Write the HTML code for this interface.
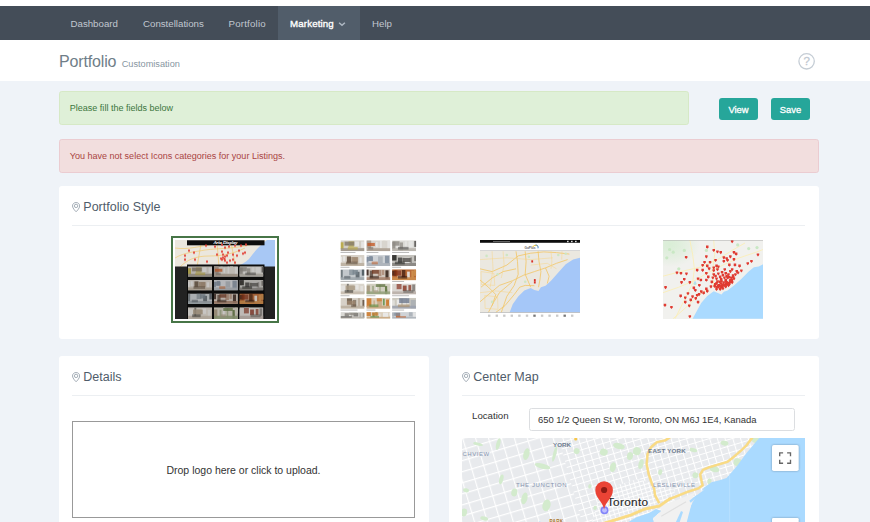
<!DOCTYPE html>
<html lang="en">
<head>
<meta charset="utf-8">
<title>Portfolio Customisation</title>
<style>
*{box-sizing:border-box;margin:0;padding:0}
html,body{width:870px;height:522px;overflow:hidden;background:#eff3f8}
body{position:relative;font-family:"Liberation Sans",sans-serif;font-size:9.7px;color:#333}
.abs{position:absolute}
#topstrip{left:0;top:0;width:870px;height:6px;background:#fff}
#nav{left:0;top:6px;width:870px;height:33.5px;background:#444d58}
#nav a{position:absolute;top:0;height:33.5px;line-height:35px;color:#c1c7d0;text-decoration:none;font-size:9.7px;white-space:nowrap}
#nav a.active{background:#515d6a;color:#fff;-webkit-text-stroke:0.35px #fff;letter-spacing:0.15px}
#head{left:0;top:39.5px;width:870px;height:41.5px;background:#fff}
#head h1{position:absolute;left:59px;top:10px;font-weight:normal;font-size:16px;letter-spacing:-0.15px;color:#6f7e88;line-height:24px;white-space:nowrap}
#head h1 small{font-size:9.2px;letter-spacing:0;color:#8796a1;font-weight:normal;margin-left:1px}
.alert{border:1px solid;border-radius:2.7px;font-size:9.03px;line-height:12px;white-space:nowrap}
#al1{left:59px;top:91px;width:630px;height:34px;background:#dff0d8;border-color:#d6e9c6;color:#3c763d;padding:10px 0 0 9.8px}
#al2{left:59px;top:139px;width:760px;height:34px;background:#f2dede;border-color:#ebccd1;color:#a94442;padding:10px 0 0 9.8px}
.btn{height:22px;line-height:23.5px;text-align:center;color:#fff;background:#26a69a;border-radius:3px;font-size:9.4px;-webkit-text-stroke:0.3px #fff}
.card{background:#fff;border-radius:3px;overflow:hidden}
.cap{position:absolute;left:24.3px;top:12px;font-size:12.5px;color:#4f5c6a;line-height:18px;white-space:nowrap}
.pin{position:absolute;left:12.6px;top:15.8px}
.hr{position:absolute;left:13px;right:14px;top:39px;height:1px;background:#eceff2}
</style>
</head>
<body>
<div id="topstrip" class="abs"></div>
<div id="nav" class="abs">
  <a style="left:70.5px">Dashboard</a>
  <a style="left:143px">Constellations</a>
  <a style="left:228.5px;letter-spacing:0.2px">Portfolio</a>
  <a class="active" style="left:278px;width:82px;padding-left:12px">Marketing<svg class="abs" style="left:60.3px;top:15.6px" width="8" height="5" viewBox="0 0 8 5"><path d="M1.1 0.7L4 3.3L6.9 0.7" fill="none" stroke="#aeb8c3" stroke-width="1.5"/></svg></a>
  <a style="left:372px">Help</a>
</div>
<div id="head" class="abs">
  <h1>Portfolio <small>Customisation</small></h1>
  <svg class="abs" style="left:797px;top:12px" width="19" height="19" viewBox="0 0 19 19"><circle cx="9.6" cy="9.3" r="7.7" fill="none" stroke="#c5cdd5" stroke-width="1.3"/><text x="9.6" y="13.3" font-family="Liberation Sans,sans-serif" font-size="11.5" fill="#bfc8d1" stroke="#bfc8d1" stroke-width="0.3" text-anchor="middle">?</text></svg>
</div>
<div id="al1" class="abs alert">Please fill the fields below</div>
<div class="abs btn" style="left:719px;top:98px;width:39px">View</div>
<div class="abs btn" style="left:771px;top:98px;width:39px">Save</div>
<div id="al2" class="abs alert">You have not select Icons categories for your Listings.</div>

<div id="c1" class="abs card" style="left:59px;top:186px;width:760px;height:153px">
  <svg class="pin" width="8.2" height="10.2" viewBox="0 0 8.2 10.2"><path d="M4.1 0.5C6.1 0.5 7.7 2 7.7 4C7.7 6.4 4.1 9.8 4.1 9.8C4.1 9.8 0.5 6.4 0.5 4C0.5 2 2.1 0.5 4.1 0.5Z" fill="none" stroke="#8d99a5" stroke-width="0.8"/><circle cx="4.1" cy="3.9" r="1.7" fill="none" stroke="#8d99a5" stroke-width="0.8"/></svg><div class="cap">Portfolio Style</div>
  <div class="hr"></div>
  <div class="abs" style="left:112px;top:50px;width:108px;height:87px;border:2px solid #477547"></div>
  <svg class="abs" style="left:116px;top:54px" width="100" height="79" viewBox="0 0 100 79"><defs><filter id="b1"><feGaussianBlur stdDeviation="0.45"/></filter></defs><g filter="url(#b1)"><rect width="100" height="27" fill="#ebe7de"/><path d="M100 0L100 27L62 27C66 24 70 23 74 19C77 15 80 11 83 8C86 5 89 2.5 92 0Z" fill="#a8c8f5"/><path d="M0 18C10 12 20 12 30 10C45 8 60 9 78 4M5 27C12 20 20 16 34 16C46 16 58 14 70 8M0 8C14 10 24 6 40 4M22 27L26 4M44 27L42 2M60 24L56 2" fill="none" stroke="#f2c765" stroke-width="0.7" opacity=".9"/><rect y="26.5" width="100" height="52.5" fill="#232323"/><rect x="12" y="24.5" width="77.5" height="54.5" fill="#0b0b0b"/><rect x="12" y="0.3" width="77.5" height="5" fill="#0a0a0a"/><path d="M47.1 16.5h1.8v1.4l-0.9 1.5l-0.9 -1.5Z" fill="#e2453b"/><path d="M48.6 18.0h1.8v1.4l-0.9 1.5l-0.9 -1.5Z" fill="#e2453b"/><path d="M46.1 18.5h1.8v1.4l-0.9 1.5l-0.9 -1.5Z" fill="#e2453b"/><path d="M49.1 15.5h1.8v1.4l-0.9 1.5l-0.9 -1.5Z" fill="#e2453b"/><path d="M30.1 4.5h1.8v1.4l-0.9 1.5l-0.9 -1.5Z" fill="#e2453b"/><path d="M39.1 5.5h1.8v1.4l-0.9 1.5l-0.9 -1.5Z" fill="#e2453b"/><path d="M46.1 3.5h1.8v1.4l-0.9 1.5l-0.9 -1.5Z" fill="#e2453b"/><path d="M49.1 6.5h1.8v1.4l-0.9 1.5l-0.9 -1.5Z" fill="#e2453b"/><path d="M53.1 5.5h1.8v1.4l-0.9 1.5l-0.9 -1.5Z" fill="#e2453b"/><path d="M59.1 4.5h1.8v1.4l-0.9 1.5l-0.9 -1.5Z" fill="#e2453b"/><path d="M65.1 4.5h1.8v1.4l-0.9 1.5l-0.9 -1.5Z" fill="#e2453b"/><path d="M70.1 3.5h1.8v1.4l-0.9 1.5l-0.9 -1.5Z" fill="#e2453b"/><path d="M13.1 9.5h1.8v1.4l-0.9 1.5l-0.9 -1.5Z" fill="#e2453b"/><path d="M9.1 14.5h1.8v1.4l-0.9 1.5l-0.9 -1.5Z" fill="#e2453b"/><path d="M18.1 11.5h1.8v1.4l-0.9 1.5l-0.9 -1.5Z" fill="#e2453b"/><path d="M41.1 13.5h1.8v1.4l-0.9 1.5l-0.9 -1.5Z" fill="#e2453b"/><path d="M46.1 10.5h1.8v1.4l-0.9 1.5l-0.9 -1.5Z" fill="#e2453b"/><path d="M47.1 13.5h1.8v1.4l-0.9 1.5l-0.9 -1.5Z" fill="#e2453b"/><path d="M51.1 14.5h1.8v1.4l-0.9 1.5l-0.9 -1.5Z" fill="#e2453b"/><path d="M52.1 11.5h1.8v1.4l-0.9 1.5l-0.9 -1.5Z" fill="#e2453b"/><path d="M57.1 13.5h1.8v1.4l-0.9 1.5l-0.9 -1.5Z" fill="#e2453b"/><path d="M63.1 9.5h1.8v1.4l-0.9 1.5l-0.9 -1.5Z" fill="#e2453b"/><path d="M61.1 14.5h1.8v1.4l-0.9 1.5l-0.9 -1.5Z" fill="#e2453b"/><path d="M67.1 12.5h1.8v1.4l-0.9 1.5l-0.9 -1.5Z" fill="#e2453b"/><path d="M69.1 11.5h1.8v1.4l-0.9 1.5l-0.9 -1.5Z" fill="#e2453b"/><path d="M9.1 18.5h1.8v1.4l-0.9 1.5l-0.9 -1.5Z" fill="#e2453b"/><path d="M19.1 18.5h1.8v1.4l-0.9 1.5l-0.9 -1.5Z" fill="#e2453b"/><path d="M31.1 20.5h1.8v1.4l-0.9 1.5l-0.9 -1.5Z" fill="#e2453b"/><path d="M45.1 17.5h1.8v1.4l-0.9 1.5l-0.9 -1.5Z" fill="#e2453b"/><path d="M49.1 19.5h1.8v1.4l-0.9 1.5l-0.9 -1.5Z" fill="#e2453b"/><path d="M54.1 19.5h1.8v1.4l-0.9 1.5l-0.9 -1.5Z" fill="#e2453b"/><path d="M57.1 18.5h1.8v1.4l-0.9 1.5l-0.9 -1.5Z" fill="#e2453b"/><path d="M59.1 21.5h1.8v1.4l-0.9 1.5l-0.9 -1.5Z" fill="#e2453b"/><path d="M51.1 21.5h1.8v1.4l-0.9 1.5l-0.9 -1.5Z" fill="#e2453b"/><svg x="13.00" y="26.30" width="24.00" height="10.40"><rect width="24.00" height="10.40" fill="#e6e1d8"/><rect x="0.00" y="1.88" width="3.01" height="6.52" fill="#c9b84a" opacity="0.91"/><rect x="3.89" y="1.70" width="3.75" height="7.60" fill="#e6e1d8" opacity="0.70"/><rect x="8.03" y="1.00" width="5.34" height="5.28" fill="#c9b84a" opacity="0.65"/><rect x="14.38" y="1.06" width="4.11" height="4.73" fill="#ffffff" opacity="0.82"/><rect x="20.63" y="1.12" width="4.12" height="5.97" fill="#ffffff" opacity="0.84"/><rect x="4.05" y="1.28" width="9.74" height="3.76" fill="#8f8373" opacity=".8"/><rect y="7.49" width="24.00" height="2.91" fill="#a79f93" opacity=".85"/><rect x="7.33" y="6.24" width="9.88" height="2.60" fill="#c9b84a" opacity=".6"/><rect width="24.00" height="10.40" fill="#2b2622" opacity="0.25"/></svg><svg x="38.90" y="26.30" width="24.00" height="10.40"><rect width="24.00" height="10.40" fill="#ece8e2"/><rect x="0.00" y="0.04" width="4.78" height="7.51" fill="#b7a99b" opacity="0.96"/><rect x="6.62" y="0.24" width="2.13" height="6.34" fill="#ece8e2" opacity="0.73"/><rect x="9.66" y="1.49" width="1.54" height="4.97" fill="#ffffff" opacity="0.90"/><rect x="13.64" y="0.27" width="1.73" height="7.26" fill="#ffffff" opacity="0.81"/><rect x="16.13" y="0.02" width="3.00" height="7.32" fill="#ece8e2" opacity="0.89"/><rect x="20.96" y="0.63" width="3.08" height="7.83" fill="#ffffff" opacity="0.78"/><rect x="1.00" y="2.49" width="7.45" height="2.94" fill="#d8622a" opacity=".8"/><rect y="7.49" width="24.00" height="2.91" fill="#b7a99b" opacity=".85"/><rect x="1.87" y="6.24" width="4.94" height="2.60" fill="#8b8078" opacity=".6"/><rect width="24.00" height="10.40" fill="#2b2622" opacity="0.25"/></svg><svg x="64.40" y="26.30" width="24.00" height="10.40"><rect width="24.00" height="10.40" fill="#efeeea"/><rect x="0.00" y="1.35" width="3.32" height="7.08" fill="#9a9690" opacity="0.83"/><rect x="4.52" y="2.48" width="2.75" height="4.75" fill="#ffffff" opacity="0.66"/><rect x="7.59" y="2.03" width="3.33" height="7.87" fill="#9a9690" opacity="0.71"/><rect x="12.71" y="0.89" width="2.06" height="4.90" fill="#ffffff" opacity="0.68"/><rect x="16.44" y="0.88" width="4.24" height="5.61" fill="#ffffff" opacity="0.75"/><rect x="22.17" y="0.56" width="3.31" height="5.68" fill="#5c5a58" opacity="0.87"/><rect x="0.41" y="0.90" width="7.01" height="4.22" fill="#9a9690" opacity=".8"/><rect y="7.49" width="24.00" height="2.91" fill="#c5c1ba" opacity=".85"/><rect x="5.86" y="6.24" width="10.59" height="2.60" fill="#5c5a58" opacity=".6"/><rect width="24.00" height="10.40" fill="#2b2622" opacity="0.25"/></svg><svg x="13.00" y="40.00" width="24.00" height="10.40"><rect width="24.00" height="10.40" fill="#ebe5dc"/><rect x="0.00" y="1.75" width="1.64" height="4.97" fill="#ffffff" opacity="0.92"/><rect x="2.57" y="1.22" width="2.19" height="4.88" fill="#ffffff" opacity="0.87"/><rect x="6.41" y="1.35" width="4.08" height="6.05" fill="#6e5a48" opacity="0.90"/><rect x="12.96" y="2.18" width="4.82" height="7.93" fill="#cdbfae" opacity="0.75"/><rect x="19.13" y="2.30" width="1.95" height="5.25" fill="#ffffff" opacity="0.77"/><rect x="21.85" y="1.51" width="2.32" height="8.07" fill="#ebe5dc" opacity="0.72"/><rect x="10.79" y="1.92" width="6.59" height="5.07" fill="#a98f74" opacity=".8"/><rect y="7.49" width="24.00" height="2.91" fill="#cdbfae" opacity=".85"/><rect x="5.47" y="6.24" width="11.60" height="2.60" fill="#6e5a48" opacity=".6"/><rect width="24.00" height="10.40" fill="#2b2622" opacity="0.25"/></svg><svg x="38.90" y="40.00" width="24.00" height="10.40"><rect width="24.00" height="10.40" fill="#e3e7ec"/><rect x="0.00" y="1.80" width="2.02" height="5.41" fill="#8a98ab" opacity="0.85"/><rect x="2.76" y="0.94" width="3.49" height="4.71" fill="#8a98ab" opacity="0.83"/><rect x="8.18" y="0.62" width="2.83" height="6.19" fill="#e3e7ec" opacity="0.61"/><rect x="11.67" y="1.31" width="4.65" height="6.25" fill="#b9c0c9" opacity="0.90"/><rect x="18.55" y="0.69" width="4.34" height="7.65" fill="#8a98ab" opacity="0.86"/><rect x="0.73" y="1.80" width="5.88" height="3.90" fill="#8a98ab" opacity=".8"/><rect y="7.49" width="24.00" height="2.91" fill="#b9c0c9" opacity=".85"/><rect x="5.29" y="6.24" width="6.14" height="2.60" fill="#d0703a" opacity=".6"/><rect width="24.00" height="10.40" fill="#2b2622" opacity="0.25"/></svg><svg x="64.40" y="40.00" width="24.00" height="10.40"><rect width="24.00" height="10.40" fill="#d6d4d0"/><rect x="0.00" y="0.08" width="4.46" height="5.20" fill="#2f2e2d" opacity="0.93"/><rect x="5.84" y="2.46" width="4.10" height="4.89" fill="#2f2e2d" opacity="0.73"/><rect x="12.23" y="2.50" width="4.85" height="7.64" fill="#ffffff" opacity="0.76"/><rect x="18.31" y="2.30" width="1.51" height="5.27" fill="#8d8a86" opacity="0.87"/><rect x="22.07" y="0.76" width="2.25" height="5.04" fill="#55524f" opacity="0.61"/><rect x="10.30" y="2.83" width="8.30" height="3.78" fill="#55524f" opacity=".8"/><rect y="7.49" width="24.00" height="2.91" fill="#8d8a86" opacity=".85"/><rect x="2.82" y="6.24" width="9.88" height="2.60" fill="#2f2e2d" opacity=".6"/><rect width="24.00" height="10.40" fill="#2b2622" opacity="0.25"/></svg><svg x="13.00" y="53.50" width="24.00" height="10.40"><rect width="24.00" height="10.40" fill="#d5dbe0"/><rect x="0.00" y="0.54" width="2.22" height="8.16" fill="#5d6870" opacity="0.74"/><rect x="2.73" y="2.51" width="3.94" height="7.93" fill="#d5dbe0" opacity="0.62"/><rect x="8.62" y="0.10" width="4.70" height="5.37" fill="#7f8e9a" opacity="0.61"/><rect x="15.14" y="2.34" width="3.89" height="6.46" fill="#5d6870" opacity="0.84"/><rect x="21.34" y="0.18" width="2.61" height="5.80" fill="#5d6870" opacity="0.99"/><rect x="12.08" y="0.66" width="5.32" height="4.34" fill="#7f8e9a" opacity=".8"/><rect y="7.49" width="24.00" height="2.91" fill="#a9b3ba" opacity=".85"/><rect x="3.70" y="6.24" width="6.21" height="2.60" fill="#5d6870" opacity=".6"/><rect width="24.00" height="10.40" fill="#2b2622" opacity="0.25"/></svg><svg x="38.90" y="53.50" width="24.00" height="10.40"><rect width="24.00" height="10.40" fill="#e5d9cf"/><rect x="0.00" y="0.18" width="2.17" height="5.56" fill="#3f2a22" opacity="0.90"/><rect x="3.45" y="1.31" width="3.24" height="7.33" fill="#3f2a22" opacity="0.66"/><rect x="8.74" y="0.53" width="2.57" height="6.70" fill="#e5d9cf" opacity="0.97"/><rect x="11.45" y="0.56" width="3.56" height="5.96" fill="#b38a72" opacity="0.74"/><rect x="15.60" y="0.56" width="2.29" height="4.82" fill="#b38a72" opacity="0.70"/><rect x="19.03" y="0.94" width="3.13" height="8.23" fill="#3f2a22" opacity="0.91"/><rect x="5.49" y="0.65" width="6.86" height="3.54" fill="#7c3f27" opacity=".8"/><rect y="7.49" width="24.00" height="2.91" fill="#b38a72" opacity=".85"/><rect x="3.25" y="6.24" width="9.26" height="2.60" fill="#3f2a22" opacity=".6"/><rect width="24.00" height="10.40" fill="#2b2622" opacity="0.25"/></svg><svg x="64.40" y="53.50" width="24.00" height="10.40"><rect width="24.00" height="10.40" fill="#c9733a"/><rect x="0.00" y="1.34" width="4.17" height="4.70" fill="#3c1a10" opacity="0.75"/><rect x="5.33" y="0.90" width="4.09" height="8.11" fill="#ffffff" opacity="0.60"/><rect x="9.80" y="0.62" width="3.45" height="8.06" fill="#3c1a10" opacity="0.71"/><rect x="15.00" y="2.16" width="2.70" height="6.47" fill="#ffffff" opacity="0.89"/><rect x="19.23" y="1.21" width="2.48" height="6.86" fill="#e09a52" opacity="0.97"/><rect x="21.74" y="0.59" width="4.92" height="5.65" fill="#e09a52" opacity="0.89"/><rect x="2.21" y="0.98" width="6.86" height="5.06" fill="#8c2f14" opacity=".8"/><rect y="7.49" width="24.00" height="2.91" fill="#e09a52" opacity=".85"/><rect x="5.86" y="6.24" width="9.20" height="2.60" fill="#3c1a10" opacity=".6"/><rect width="24.00" height="10.40" fill="#2b2622" opacity="0.25"/></svg><svg x="13.00" y="67.30" width="24.00" height="11.70"><rect width="24.00" height="11.70" fill="#efe9e0"/><rect x="0.00" y="2.15" width="5.40" height="9.10" fill="#ffffff" opacity="0.66"/><rect x="6.38" y="0.19" width="1.91" height="9.36" fill="#4a4640" opacity="0.60"/><rect x="8.35" y="1.46" width="5.03" height="7.25" fill="#d6cabb" opacity="0.63"/><rect x="14.21" y="1.12" width="3.86" height="5.37" fill="#ffffff" opacity="0.78"/><rect x="19.86" y="2.56" width="2.62" height="9.07" fill="#ffffff" opacity="0.61"/><rect x="23.85" y="2.11" width="4.58" height="9.16" fill="#b8a68f" opacity="0.82"/><rect x="5.03" y="2.22" width="9.69" height="4.82" fill="#b8a68f" opacity=".8"/><rect y="8.42" width="24.00" height="3.28" fill="#d6cabb" opacity=".85"/><rect x="4.18" y="7.02" width="8.44" height="2.92" fill="#4a4640" opacity=".6"/><rect width="24.00" height="11.70" fill="#2b2622" opacity="0.25"/></svg><svg x="38.90" y="67.30" width="24.00" height="11.70"><rect width="24.00" height="11.70" fill="#e6e2d4"/><rect x="0.00" y="2.13" width="3.46" height="8.72" fill="#b7a98f" opacity="0.99"/><rect x="5.68" y="2.48" width="1.89" height="6.16" fill="#9fae84" opacity="0.70"/><rect x="9.17" y="0.29" width="1.56" height="8.91" fill="#ffffff" opacity="0.89"/><rect x="12.84" y="1.15" width="1.50" height="9.25" fill="#9fae84" opacity="0.72"/><rect x="15.16" y="2.27" width="3.28" height="6.97" fill="#e6e2d4" opacity="0.61"/><rect x="18.58" y="2.75" width="2.36" height="8.65" fill="#6f8550" opacity="0.97"/><rect x="20.96" y="0.40" width="5.38" height="5.91" fill="#e6e2d4" opacity="0.90"/><rect x="9.35" y="0.68" width="9.51" height="3.02" fill="#6f8550" opacity=".8"/><rect y="8.42" width="24.00" height="3.28" fill="#9fae84" opacity=".85"/><rect x="6.90" y="7.02" width="4.85" height="2.92" fill="#b7a98f" opacity=".6"/><rect width="24.00" height="11.70" fill="#2b2622" opacity="0.25"/></svg><svg x="64.40" y="67.30" width="24.00" height="11.70"><rect width="24.00" height="11.70" fill="#eeeae6"/><rect x="0.00" y="1.90" width="3.33" height="7.45" fill="#eeeae6" opacity="0.73"/><rect x="4.96" y="0.39" width="5.41" height="6.57" fill="#ffffff" opacity="0.77"/><rect x="10.69" y="2.19" width="3.82" height="5.82" fill="#9c4a38" opacity="0.91"/><rect x="16.31" y="1.70" width="2.78" height="6.20" fill="#9c4a38" opacity="0.85"/><rect x="20.12" y="1.08" width="2.79" height="7.59" fill="#6f6a66" opacity="0.67"/><rect x="4.55" y="0.53" width="4.93" height="5.63" fill="#9c4a38" opacity=".8"/><rect y="8.42" width="24.00" height="3.28" fill="#c9bdb6" opacity=".85"/><rect x="11.18" y="7.02" width="10.14" height="2.92" fill="#6f6a66" opacity=".6"/><rect width="24.00" height="11.70" fill="#2b2622" opacity="0.25"/></svg></g><text x="50.5" y="4.3" font-family="Liberation Serif,serif" font-style="italic" font-size="4.6" fill="#fff" stroke="#fff" stroke-width="0.15" text-anchor="middle">Aria Display</text></svg>
  <svg class="abs" style="left:281px;top:54px" width="77" height="79" viewBox="0 0 77 79"><defs><filter id="b2"><feGaussianBlur stdDeviation="0.45"/></filter></defs><g filter="url(#b2)"><svg x="0.50" y="0.30" width="24.00" height="11.00"><rect width="24.00" height="11.00" fill="#e6e1d8"/><rect x="0.00" y="1.98" width="3.01" height="6.90" fill="#c9b84a" opacity="0.91"/><rect x="3.89" y="1.80" width="3.75" height="8.04" fill="#e6e1d8" opacity="0.70"/><rect x="8.03" y="1.06" width="5.34" height="5.58" fill="#c9b84a" opacity="0.65"/><rect x="14.38" y="1.12" width="4.11" height="5.00" fill="#ffffff" opacity="0.82"/><rect x="20.63" y="1.18" width="4.12" height="6.31" fill="#ffffff" opacity="0.84"/><rect x="4.05" y="1.35" width="9.74" height="3.98" fill="#8f8373" opacity=".8"/><rect y="7.92" width="24.00" height="3.08" fill="#a79f93" opacity=".85"/><rect x="7.33" y="6.60" width="9.88" height="2.75" fill="#c9b84a" opacity=".6"/><rect width="24.00" height="11.00" fill="#2b2622" opacity="0.1"/></svg><rect x="0.5" y="12.100000000000001" width="15" height="0.9" fill="#b5b5b5"/><svg x="26.40" y="0.30" width="24.00" height="11.00"><rect width="24.00" height="11.00" fill="#ece8e2"/><rect x="0.00" y="0.05" width="4.78" height="7.95" fill="#b7a99b" opacity="0.96"/><rect x="6.62" y="0.26" width="2.13" height="6.71" fill="#ece8e2" opacity="0.73"/><rect x="9.66" y="1.57" width="1.54" height="5.25" fill="#ffffff" opacity="0.90"/><rect x="13.64" y="0.29" width="1.73" height="7.68" fill="#ffffff" opacity="0.81"/><rect x="16.13" y="0.02" width="3.00" height="7.75" fill="#ece8e2" opacity="0.89"/><rect x="20.96" y="0.67" width="3.08" height="8.28" fill="#ffffff" opacity="0.78"/><rect x="1.00" y="2.64" width="7.45" height="3.11" fill="#d8622a" opacity=".8"/><rect y="7.92" width="24.00" height="3.08" fill="#b7a99b" opacity=".85"/><rect x="1.87" y="6.60" width="4.94" height="2.75" fill="#8b8078" opacity=".6"/><rect width="24.00" height="11.00" fill="#2b2622" opacity="0.1"/></svg><rect x="26.4" y="12.100000000000001" width="12" height="0.9" fill="#b5b5b5"/><svg x="52.10" y="0.30" width="24.00" height="11.00"><rect width="24.00" height="11.00" fill="#efeeea"/><rect x="0.00" y="1.43" width="3.32" height="7.49" fill="#9a9690" opacity="0.83"/><rect x="4.52" y="2.63" width="2.75" height="5.03" fill="#ffffff" opacity="0.66"/><rect x="7.59" y="2.15" width="3.33" height="8.33" fill="#9a9690" opacity="0.71"/><rect x="12.71" y="0.94" width="2.06" height="5.18" fill="#ffffff" opacity="0.68"/><rect x="16.44" y="0.93" width="4.24" height="5.93" fill="#ffffff" opacity="0.75"/><rect x="22.17" y="0.59" width="3.31" height="6.01" fill="#5c5a58" opacity="0.87"/><rect x="0.41" y="0.95" width="7.01" height="4.46" fill="#9a9690" opacity=".8"/><rect y="7.92" width="24.00" height="3.08" fill="#c5c1ba" opacity=".85"/><rect x="5.86" y="6.60" width="10.59" height="2.75" fill="#5c5a58" opacity=".6"/><rect width="24.00" height="11.00" fill="#2b2622" opacity="0.1"/></svg><rect x="52.1" y="12.100000000000001" width="17" height="0.9" fill="#b5b5b5"/><svg x="0.50" y="15.00" width="24.00" height="11.00"><rect width="24.00" height="11.00" fill="#ebe5dc"/><rect x="0.00" y="1.85" width="1.64" height="5.26" fill="#ffffff" opacity="0.92"/><rect x="2.57" y="1.29" width="2.19" height="5.16" fill="#ffffff" opacity="0.87"/><rect x="6.41" y="1.43" width="4.08" height="6.40" fill="#6e5a48" opacity="0.90"/><rect x="12.96" y="2.30" width="4.82" height="8.38" fill="#cdbfae" opacity="0.75"/><rect x="19.13" y="2.43" width="1.95" height="5.55" fill="#ffffff" opacity="0.77"/><rect x="21.85" y="1.60" width="2.32" height="8.54" fill="#ebe5dc" opacity="0.72"/><rect x="10.79" y="2.03" width="6.59" height="5.37" fill="#a98f74" opacity=".8"/><rect y="7.92" width="24.00" height="3.08" fill="#cdbfae" opacity=".85"/><rect x="5.47" y="6.60" width="11.60" height="2.75" fill="#6e5a48" opacity=".6"/><rect width="24.00" height="11.00" fill="#2b2622" opacity="0.1"/></svg><rect x="0.5" y="26.8" width="9" height="0.9" fill="#b5b5b5"/><svg x="26.40" y="15.00" width="24.00" height="11.00"><rect width="24.00" height="11.00" fill="#e3e7ec"/><rect x="0.00" y="1.90" width="2.02" height="5.72" fill="#8a98ab" opacity="0.85"/><rect x="2.76" y="1.00" width="3.49" height="4.98" fill="#8a98ab" opacity="0.83"/><rect x="8.18" y="0.65" width="2.83" height="6.54" fill="#e3e7ec" opacity="0.61"/><rect x="11.67" y="1.38" width="4.65" height="6.61" fill="#b9c0c9" opacity="0.90"/><rect x="18.55" y="0.73" width="4.34" height="8.09" fill="#8a98ab" opacity="0.86"/><rect x="0.73" y="1.90" width="5.88" height="4.12" fill="#8a98ab" opacity=".8"/><rect y="7.92" width="24.00" height="3.08" fill="#b9c0c9" opacity=".85"/><rect x="5.29" y="6.60" width="6.14" height="2.75" fill="#d0703a" opacity=".6"/><rect width="24.00" height="11.00" fill="#2b2622" opacity="0.1"/></svg><rect x="26.4" y="26.8" width="9" height="0.9" fill="#b5b5b5"/><svg x="52.10" y="15.00" width="24.00" height="11.00"><rect width="24.00" height="11.00" fill="#d6d4d0"/><rect x="0.00" y="0.08" width="4.46" height="5.50" fill="#2f2e2d" opacity="0.93"/><rect x="5.84" y="2.60" width="4.10" height="5.17" fill="#2f2e2d" opacity="0.73"/><rect x="12.23" y="2.65" width="4.85" height="8.08" fill="#ffffff" opacity="0.76"/><rect x="18.31" y="2.43" width="1.51" height="5.58" fill="#8d8a86" opacity="0.87"/><rect x="22.07" y="0.80" width="2.25" height="5.33" fill="#55524f" opacity="0.61"/><rect x="10.30" y="2.99" width="8.30" height="4.00" fill="#55524f" opacity=".8"/><rect y="7.92" width="24.00" height="3.08" fill="#8d8a86" opacity=".85"/><rect x="2.82" y="6.60" width="9.88" height="2.75" fill="#2f2e2d" opacity=".6"/><rect width="24.00" height="11.00" fill="#2b2622" opacity="0.1"/></svg><rect x="52.1" y="26.8" width="9" height="0.9" fill="#b5b5b5"/><svg x="0.50" y="29.30" width="24.00" height="11.00"><rect width="24.00" height="11.00" fill="#d5dbe0"/><rect x="0.00" y="0.57" width="2.22" height="8.63" fill="#5d6870" opacity="0.74"/><rect x="2.73" y="2.65" width="3.94" height="8.39" fill="#d5dbe0" opacity="0.62"/><rect x="8.62" y="0.11" width="4.70" height="5.68" fill="#7f8e9a" opacity="0.61"/><rect x="15.14" y="2.48" width="3.89" height="6.83" fill="#5d6870" opacity="0.84"/><rect x="21.34" y="0.19" width="2.61" height="6.13" fill="#5d6870" opacity="0.99"/><rect x="12.08" y="0.70" width="5.32" height="4.59" fill="#7f8e9a" opacity=".8"/><rect y="7.92" width="24.00" height="3.08" fill="#a9b3ba" opacity=".85"/><rect x="3.70" y="6.60" width="6.21" height="2.75" fill="#5d6870" opacity=".6"/><rect width="24.00" height="11.00" fill="#2b2622" opacity="0.1"/></svg><rect x="0.5" y="41.1" width="15" height="0.9" fill="#b5b5b5"/><svg x="26.40" y="29.30" width="24.00" height="11.00"><rect width="24.00" height="11.00" fill="#e5d9cf"/><rect x="0.00" y="0.19" width="2.17" height="5.88" fill="#3f2a22" opacity="0.90"/><rect x="3.45" y="1.39" width="3.24" height="7.75" fill="#3f2a22" opacity="0.66"/><rect x="8.74" y="0.56" width="2.57" height="7.09" fill="#e5d9cf" opacity="0.97"/><rect x="11.45" y="0.59" width="3.56" height="6.31" fill="#b38a72" opacity="0.74"/><rect x="15.60" y="0.59" width="2.29" height="5.10" fill="#b38a72" opacity="0.70"/><rect x="19.03" y="1.00" width="3.13" height="8.71" fill="#3f2a22" opacity="0.91"/><rect x="5.49" y="0.68" width="6.86" height="3.75" fill="#7c3f27" opacity=".8"/><rect y="7.92" width="24.00" height="3.08" fill="#b38a72" opacity=".85"/><rect x="3.25" y="6.60" width="9.26" height="2.75" fill="#3f2a22" opacity=".6"/><rect width="24.00" height="11.00" fill="#2b2622" opacity="0.1"/></svg><rect x="26.4" y="41.1" width="9" height="0.9" fill="#b5b5b5"/><svg x="52.10" y="29.30" width="24.00" height="11.00"><rect width="24.00" height="11.00" fill="#c9733a"/><rect x="0.00" y="1.41" width="4.17" height="4.97" fill="#3c1a10" opacity="0.75"/><rect x="5.33" y="0.95" width="4.09" height="8.58" fill="#ffffff" opacity="0.60"/><rect x="9.80" y="0.66" width="3.45" height="8.53" fill="#3c1a10" opacity="0.71"/><rect x="15.00" y="2.29" width="2.70" height="6.85" fill="#ffffff" opacity="0.89"/><rect x="19.23" y="1.28" width="2.48" height="7.26" fill="#e09a52" opacity="0.97"/><rect x="21.74" y="0.62" width="4.92" height="5.98" fill="#e09a52" opacity="0.89"/><rect x="2.21" y="1.04" width="6.86" height="5.35" fill="#8c2f14" opacity=".8"/><rect y="7.92" width="24.00" height="3.08" fill="#e09a52" opacity=".85"/><rect x="5.86" y="6.60" width="9.20" height="2.75" fill="#3c1a10" opacity=".6"/><rect width="24.00" height="11.00" fill="#2b2622" opacity="0.1"/></svg><rect x="52.1" y="41.1" width="12" height="0.9" fill="#b5b5b5"/><svg x="0.50" y="43.50" width="24.00" height="11.00"><rect width="24.00" height="11.00" fill="#efe9e0"/><rect x="0.00" y="2.02" width="5.40" height="8.56" fill="#ffffff" opacity="0.66"/><rect x="6.38" y="0.18" width="1.91" height="8.80" fill="#4a4640" opacity="0.60"/><rect x="8.35" y="1.37" width="5.03" height="6.82" fill="#d6cabb" opacity="0.63"/><rect x="14.21" y="1.05" width="3.86" height="5.05" fill="#ffffff" opacity="0.78"/><rect x="19.86" y="2.41" width="2.62" height="8.53" fill="#ffffff" opacity="0.61"/><rect x="23.85" y="1.99" width="4.58" height="8.61" fill="#b8a68f" opacity="0.82"/><rect x="5.03" y="2.08" width="9.69" height="4.53" fill="#b8a68f" opacity=".8"/><rect y="7.92" width="24.00" height="3.08" fill="#d6cabb" opacity=".85"/><rect x="4.18" y="6.60" width="8.44" height="2.75" fill="#4a4640" opacity=".6"/><rect width="24.00" height="11.00" fill="#2b2622" opacity="0.1"/></svg><rect x="0.5" y="55.3" width="9" height="0.9" fill="#b5b5b5"/><svg x="26.40" y="43.50" width="24.00" height="11.00"><rect width="24.00" height="11.00" fill="#e6e2d4"/><rect x="0.00" y="2.00" width="3.46" height="8.20" fill="#b7a98f" opacity="0.99"/><rect x="5.68" y="2.33" width="1.89" height="5.79" fill="#9fae84" opacity="0.70"/><rect x="9.17" y="0.28" width="1.56" height="8.38" fill="#ffffff" opacity="0.89"/><rect x="12.84" y="1.08" width="1.50" height="8.70" fill="#9fae84" opacity="0.72"/><rect x="15.16" y="2.14" width="3.28" height="6.55" fill="#e6e2d4" opacity="0.61"/><rect x="18.58" y="2.58" width="2.36" height="8.13" fill="#6f8550" opacity="0.97"/><rect x="20.96" y="0.38" width="5.38" height="5.56" fill="#e6e2d4" opacity="0.90"/><rect x="9.35" y="0.64" width="9.51" height="2.84" fill="#6f8550" opacity=".8"/><rect y="7.92" width="24.00" height="3.08" fill="#9fae84" opacity=".85"/><rect x="6.90" y="6.60" width="4.85" height="2.75" fill="#b7a98f" opacity=".6"/><rect width="24.00" height="11.00" fill="#2b2622" opacity="0.1"/></svg><rect x="26.4" y="55.3" width="9" height="0.9" fill="#b5b5b5"/><svg x="52.10" y="43.50" width="24.00" height="11.00"><rect width="24.00" height="11.00" fill="#eeeae6"/><rect x="0.00" y="1.78" width="3.33" height="7.00" fill="#eeeae6" opacity="0.73"/><rect x="4.96" y="0.37" width="5.41" height="6.17" fill="#ffffff" opacity="0.77"/><rect x="10.69" y="2.06" width="3.82" height="5.47" fill="#9c4a38" opacity="0.91"/><rect x="16.31" y="1.60" width="2.78" height="5.83" fill="#9c4a38" opacity="0.85"/><rect x="20.12" y="1.01" width="2.79" height="7.14" fill="#6f6a66" opacity="0.67"/><rect x="4.55" y="0.50" width="4.93" height="5.29" fill="#9c4a38" opacity=".8"/><rect y="7.92" width="24.00" height="3.08" fill="#c9bdb6" opacity=".85"/><rect x="11.18" y="6.60" width="10.14" height="2.75" fill="#6f6a66" opacity=".6"/><rect width="24.00" height="11.00" fill="#2b2622" opacity="0.1"/></svg><rect x="52.1" y="55.3" width="17" height="0.9" fill="#b5b5b5"/><svg x="0.50" y="57.80" width="24.00" height="11.00"><rect width="24.00" height="11.00" fill="#ebe5dc"/><rect x="0.00" y="2.31" width="4.61" height="6.74" fill="#ebe5dc" opacity="0.93"/><rect x="6.45" y="0.54" width="5.09" height="5.73" fill="#6e5a48" opacity="0.85"/><rect x="12.38" y="2.10" width="3.37" height="6.53" fill="#6e5a48" opacity="0.64"/><rect x="17.39" y="0.39" width="2.32" height="8.47" fill="#cdbfae" opacity="1.00"/><rect x="19.87" y="1.12" width="2.10" height="5.89" fill="#ebe5dc" opacity="0.82"/><rect x="21.97" y="2.12" width="2.21" height="6.98" fill="#6e5a48" opacity="0.90"/><rect x="6.46" y="2.91" width="8.17" height="4.48" fill="#a98f74" opacity=".8"/><rect y="7.92" width="24.00" height="3.08" fill="#cdbfae" opacity=".85"/><rect x="10.69" y="6.60" width="4.93" height="2.75" fill="#6e5a48" opacity=".6"/><rect width="24.00" height="11.00" fill="#2b2622" opacity="0.1"/></svg><rect x="0.5" y="69.6" width="17" height="0.9" fill="#b5b5b5"/><svg x="26.40" y="57.80" width="24.00" height="11.00"><rect width="24.00" height="11.00" fill="#f0e3cf"/><rect x="0.00" y="0.54" width="4.97" height="8.72" fill="#e08a3a" opacity="0.99"/><rect x="6.94" y="2.64" width="1.69" height="6.28" fill="#d9b48a" opacity="0.75"/><rect x="10.80" y="2.01" width="4.68" height="6.97" fill="#d9b48a" opacity="0.83"/><rect x="16.57" y="0.93" width="1.70" height="6.67" fill="#5f9a4a" opacity="0.83"/><rect x="19.69" y="1.69" width="3.00" height="6.77" fill="#e08a3a" opacity="1.00"/><rect x="22.93" y="2.13" width="2.05" height="6.89" fill="#ffffff" opacity="0.91"/><rect x="10.37" y="0.46" width="5.08" height="3.05" fill="#e08a3a" opacity=".8"/><rect y="7.92" width="24.00" height="3.08" fill="#d9b48a" opacity=".85"/><rect x="2.94" y="6.60" width="9.05" height="2.75" fill="#5f9a4a" opacity=".6"/><rect width="24.00" height="11.00" fill="#2b2622" opacity="0.1"/></svg><rect x="26.4" y="69.6" width="9" height="0.9" fill="#b5b5b5"/><svg x="52.10" y="57.80" width="24.00" height="11.00"><rect width="24.00" height="11.00" fill="#dfdcd2"/><rect x="0.00" y="2.41" width="2.66" height="5.80" fill="#ffffff" opacity="0.67"/><rect x="4.66" y="1.78" width="4.28" height="5.66" fill="#ffffff" opacity="1.00"/><rect x="10.87" y="0.91" width="3.33" height="6.67" fill="#ffffff" opacity="0.93"/><rect x="14.61" y="0.26" width="2.52" height="6.52" fill="#ffffff" opacity="0.86"/><rect x="18.53" y="2.02" width="5.09" height="8.72" fill="#a9b0bf" opacity="0.60"/><rect x="7.05" y="0.37" width="10.21" height="4.93" fill="#75829a" opacity=".8"/><rect y="7.92" width="24.00" height="3.08" fill="#a9b0bf" opacity=".85"/><rect x="5.86" y="6.60" width="11.62" height="2.75" fill="#b99a72" opacity=".6"/><rect width="24.00" height="11.00" fill="#2b2622" opacity="0.1"/></svg><rect x="52.1" y="69.6" width="12" height="0.9" fill="#b5b5b5"/><svg x="0.50" y="72.10" width="24.00" height="6.60"><rect width="24.00" height="6.60" fill="#efeeea"/><rect x="0.00" y="1.61" width="2.79" height="4.78" fill="#efeeea" opacity="0.62"/><rect x="4.19" y="1.06" width="4.22" height="3.24" fill="#9a9690" opacity="0.93"/><rect x="10.34" y="0.91" width="1.72" height="4.44" fill="#c5c1ba" opacity="0.92"/><rect x="12.95" y="0.93" width="4.84" height="3.52" fill="#5c5a58" opacity="0.65"/><rect x="18.75" y="0.82" width="2.02" height="5.16" fill="#c5c1ba" opacity="0.92"/><rect x="22.11" y="0.79" width="2.85" height="4.93" fill="#9a9690" opacity="0.81"/><rect x="8.63" y="0.63" width="8.05" height="2.22" fill="#9a9690" opacity=".8"/><rect y="4.75" width="24.00" height="1.85" fill="#c5c1ba" opacity=".85"/><rect x="0.13" y="3.96" width="11.11" height="1.65" fill="#5c5a58" opacity=".6"/><rect width="24.00" height="6.60" fill="#2b2622" opacity="0.1"/></svg><svg x="26.40" y="72.10" width="24.00" height="6.60"><rect width="24.00" height="6.60" fill="#f0e3cf"/><rect x="0.00" y="0.05" width="4.42" height="3.87" fill="#e08a3a" opacity="0.94"/><rect x="6.11" y="1.00" width="2.15" height="3.49" fill="#5f9a4a" opacity="0.93"/><rect x="8.94" y="0.09" width="1.84" height="3.60" fill="#5f9a4a" opacity="0.61"/><rect x="12.49" y="1.52" width="1.62" height="3.94" fill="#ffffff" opacity="0.79"/><rect x="16.55" y="0.55" width="5.24" height="4.44" fill="#ffffff" opacity="0.96"/><rect x="22.74" y="0.52" width="4.65" height="3.05" fill="#ffffff" opacity="0.89"/><rect x="5.69" y="0.31" width="6.07" height="3.26" fill="#e08a3a" opacity=".8"/><rect y="4.75" width="24.00" height="1.85" fill="#d9b48a" opacity=".85"/><rect x="3.92" y="3.96" width="8.79" height="1.65" fill="#5f9a4a" opacity=".6"/><rect width="24.00" height="6.60" fill="#2b2622" opacity="0.1"/></svg><svg x="52.10" y="72.10" width="24.00" height="6.60"><rect width="24.00" height="6.60" fill="#e3e7ec"/><rect x="0.00" y="0.54" width="1.85" height="3.85" fill="#b9c0c9" opacity="0.98"/><rect x="3.80" y="0.98" width="4.28" height="4.58" fill="#d0703a" opacity="0.84"/><rect x="8.96" y="0.41" width="1.84" height="3.24" fill="#e3e7ec" opacity="0.78"/><rect x="12.10" y="1.00" width="2.47" height="4.39" fill="#e3e7ec" opacity="0.87"/><rect x="16.80" y="0.10" width="3.64" height="4.16" fill="#b9c0c9" opacity="0.89"/><rect x="20.98" y="0.42" width="3.59" height="5.13" fill="#ffffff" opacity="0.74"/><rect x="2.02" y="0.53" width="5.87" height="3.21" fill="#8a98ab" opacity=".8"/><rect y="4.75" width="24.00" height="1.85" fill="#b9c0c9" opacity=".85"/><rect x="3.91" y="3.96" width="9.92" height="1.65" fill="#d0703a" opacity=".6"/><rect width="24.00" height="6.60" fill="#2b2622" opacity="0.1"/></svg></g></svg>
  <svg class="abs" style="left:421px;top:54px" width="100" height="79" viewBox="0 0 100 79"><defs><filter id="b3"><feGaussianBlur stdDeviation="0.4"/></filter><clipPath id="c3"><rect y="11" width="100" height="61.5"/></clipPath></defs><g filter="url(#b3)"><rect width="100" height="79" fill="#fff"/><rect width="100" height="2.8" fill="#111"/><rect y="10.6" width="100" height="0.6" fill="#9a9a9a"/><g clip-path="url(#c3)"><rect y="11" width="100" height="61.5" fill="#ebe8e0"/><path d="M100.1 17.8 L93.1 19.6 L85.7 24.2 L78.3 32.5 L71.0 40.8 L65.5 45.7 L60.9 47.2 L58.5 50.9 L54.4 50.0 L50.7 48.1 L44.3 50.5 L38.2 56.4 L32.7 64.2 L29.6 72.4 L100.1 72.4Z" fill="#a5c7f8"/><path d="M-0.1 28.8 L12.1 31.6 L26.8 25.1 L38.2 15.9 L50.7 13.2 L63.6 11.9 L76.5 12.6 L89.4 14.1" fill="none" stroke="#f3c565" stroke-width="0.8" stroke-linejoin="round"/><path d="M-0.1 61.9 L8.4 54.6 L19.4 45.4 L32.3 40.8 L43.4 35.3 L54.4 31.6 L65.5 27.9 L76.5 23.3 L87.6 19.6" fill="none" stroke="#f3c565" stroke-width="0.8" stroke-linejoin="round"/><path d="M1.0 47.2 L12.1 38.0 L23.1 31.6 L36.0 28.8" fill="none" stroke="#f3c565" stroke-width="0.8" stroke-linejoin="round"/><path d="M8.4 72.4 L13.9 61.9 L19.4 52.7 L32.3 41.7" fill="none" stroke="#f3c565" stroke-width="0.8" stroke-linejoin="round"/><path d="M36.0 11.3 L37.5 21.4 L38.2 34.3 L34.2 45.4 L26.8 56.4 L21.3 72.4" fill="none" stroke="#f3c565" stroke-width="0.8" stroke-linejoin="round"/><path d="M58.1 11.3 L59.0 21.4 L60.9 31.6 L59.9 39.9 L58.5 47.2" fill="none" stroke="#f3c565" stroke-width="0.8" stroke-linejoin="round"/><path d="M45.2 11.3 L46.1 21.4 L45.2 34.3 L50.7 47.2" fill="none" stroke="#f3c565" stroke-width="0.8" stroke-linejoin="round"/><path d="M15.8 72.4 L25.0 65.6 L34.2 54.6 L39.7 47.2 L45.2 45.4 L54.4 45.7" fill="none" stroke="#f3c565" stroke-width="0.8" stroke-linejoin="round"/><path d="M-0.1 39.9 L8.4 47.2 L15.8 54.6 L12.1 65.6" fill="none" stroke="#f3c565" stroke-width="0.8" stroke-linejoin="round"/><path d="M65.5 27.9 L69.1 36.2 L67.3 43.5" fill="none" stroke="#f3c565" stroke-width="0.8" stroke-linejoin="round"/><path d="M-0.1 19.6 L26.8 17.8 L50.7 19.6 L72.8 17.8" fill="none" stroke="#f6d488" stroke-width="0.5"/><path d="M-0.1 52.7 L15.8 50.9 L32.3 52.7" fill="none" stroke="#f6d488" stroke-width="0.5"/><path d="M12.1 11.3 L13.0 28.8 L10.2 47.2" fill="none" stroke="#f6d488" stroke-width="0.5"/><path d="M23.1 11.3 L24.1 25.1 L21.3 38.0" fill="none" stroke="#f6d488" stroke-width="0.5"/><path d="M71.0 11.3 L71.9 21.4 L71.0 28.8" fill="none" stroke="#f6d488" stroke-width="0.5"/><path d="M82.0 11.3 L81.7 19.6" fill="none" stroke="#f6d488" stroke-width="0.5"/><path d="M1.0 31.6 L13.9 33.4 L14.8 45.4 L1.4 44.5 L1.0 31.6" fill="none" stroke="#f6d488" stroke-width="0.5"/><path d="M4.7 55.5 L17.6 56.8 L18.0 69.3 L5.1 68.4 L4.7 55.5" fill="none" stroke="#f6d488" stroke-width="0.5"/><path d="M50.7 25.1 L67.3 23.3 L76.5 28.8" fill="none" stroke="#f6d488" stroke-width="0.5"/><circle cx="6.6" cy="15.9" r="1.3" fill="#cfe6c3"/><circle cx="26.8" cy="15.0" r="1.3" fill="#cfe6c3"/><circle cx="48.9" cy="16.8" r="1.3" fill="#cfe6c3"/><circle cx="78.3" cy="15.0" r="1.3" fill="#cfe6c3"/><circle cx="85.7" cy="13.7" r="1.3" fill="#cfe6c3"/><circle cx="17.6" cy="34.3" r="1.3" fill="#cfe6c3"/><circle cx="45.2" cy="41.7" r="1.3" fill="#cfe6c3"/><circle cx="12.1" cy="61.9" r="1.3" fill="#cfe6c3"/><rect x="51.3" y="20.3" width="1.8" height="2.2" fill="#d93025"/><rect x="53.9" y="39.1" width="1.8" height="2.2" fill="#d93025"/><rect x="53.9" y="41.3" width="1.8" height="2.2" fill="#d93025"/></g><rect y="72.4" width="100" height="0.5" fill="#999"/><path d="M52.5 7.2C53.5 5.2 56 4.6 57.6 6" fill="none" stroke="#f2b90c" stroke-width="0.9"/><path d="M55.5 5C57.3 4.8 58.6 6.2 58 8.3" fill="none" stroke="#2a7bd0" stroke-width="0.9"/><rect x="8.0" y="74.6" width="2.4" height="2.2" fill="#c9c9c9"/><rect x="15.6" y="74.6" width="2.4" height="2.2" fill="#c9c9c9"/><rect x="23.1" y="74.6" width="2.4" height="2.2" fill="#c9c9c9"/><rect x="30.6" y="74.6" width="2.4" height="2.2" fill="#c9c9c9"/><rect x="38.2" y="74.6" width="2.4" height="2.2" fill="#c9c9c9"/><rect x="45.8" y="74.6" width="2.4" height="2.2" fill="#c9c9c9"/><rect x="53.3" y="74.6" width="2.4" height="2.2" fill="#777"/><rect x="60.9" y="74.6" width="2.4" height="2.2" fill="#c9c9c9"/><rect x="68.4" y="74.6" width="2.4" height="2.2" fill="#c9c9c9"/><rect x="76.0" y="74.6" width="2.4" height="2.2" fill="#c9c9c9"/><rect x="83.5" y="74.6" width="2.4" height="2.2" fill="#777"/><rect x="91.0" y="74.6" width="2.4" height="2.2" fill="#c9c9c9"/><rect x="87" y="0.8" width="1.6" height="1.4" fill="#ddd"/><rect x="91" y="0.8" width="1.6" height="1.4" fill="#ddd"/><rect x="95" y="0.8" width="1.6" height="1.4" fill="#ddd"/><rect x="13" y="1.1" width="17" height="0.7" fill="#888"/></g><text x="50" y="9.3" font-family="Liberation Sans,sans-serif" font-size="3.2" fill="#666" text-anchor="middle" font-weight="bold">GoPlus</text></svg>
  <svg class="abs" style="left:604px;top:54px" width="100" height="79" viewBox="0 0 100 79"><defs><filter id="b4"><feGaussianBlur stdDeviation="0.4"/></filter><radialGradient id="g4" cx="0.12" cy="0.1" r="0.5"><stop offset="0" stop-color="#d9eed6"/><stop offset="1" stop-color="#d3ebd0" stop-opacity="0"/></radialGradient></defs><g filter="url(#b4)"><rect width="100" height="79" fill="#f1f1ee"/><rect width="60" height="45" fill="url(#g4)"/><path d="M100.1 24.2 L95.8 26.6 L90.9 27.3 L85.7 31.6 L78.3 38.9 L71.0 45.4 L64.5 50.5 L60.9 51.8 L58.5 54.6 L54.8 53.1 L50.7 51.3 L44.3 56.1 L38.2 62.9 L33.8 71.1 L29.6 78.7 L100.1 78.7Z" fill="#aadaff"/><path d="M-0.1 52.7 L15.8 47.2 L32.3 40.2 L45.2 32.5 L59.9 25.1 L76.5 17.8 L93.1 12.2 L100.1 9.5" fill="none" stroke="#fbeeb8" stroke-width="0.9"/><path d="M-0.1 36.2 L17.6 31.6 L37.9 27.0 L54.4 19.6 L69.1 10.4 L82.0 3.0" fill="none" stroke="#fbeeb8" stroke-width="0.9"/><path d="M26.8 -0.1 L29.6 14.1 L31.4 28.8 L29.6 43.5 L21.3 60.1 L12.1 78.7" fill="none" stroke="#fbeeb8" stroke-width="0.9"/><path d="M50.7 -0.1 L51.7 14.1 L49.8 28.8 L50.7 47.2" fill="none" stroke="#fbeeb8" stroke-width="0.9"/><path d="M10.2 78.7 L25.0 65.6 L36.0 54.6 L45.2 49.1" fill="none" stroke="#fbeeb8" stroke-width="0.9"/><circle cx="6.6" cy="9.5" r="1.6" fill="#c9e8c4"/><circle cx="10.2" cy="12.2" r="1.6" fill="#c9e8c4"/><circle cx="21.3" cy="10.4" r="1.6" fill="#c9e8c4"/><circle cx="3.8" cy="17.8" r="1.6" fill="#c9e8c4"/><circle cx="74.7" cy="4.9" r="1.6" fill="#c9e8c4"/><circle cx="85.7" cy="8.6" r="1.6" fill="#c9e8c4"/><circle cx="94.0" cy="7.6" r="1.6" fill="#c9e8c4"/><circle cx="43.4" cy="10.4" r="1.6" fill="#c9e8c4"/><circle cx="32.0" cy="43.5" r="1.6" fill="#c9e8c4"/><circle cx="15.8" cy="28.8" r="1.6" fill="#c9e8c4"/><path d="M31.4 41.3 l1.2 0 l0.3 3 l-1.5 0Z" fill="#aadaff"/><path d="M67.9 0.1h2.5v1.6l-1.25 1.5l-1.25 -1.5Z" fill="#e03a30"/><path d="M43.0 5.6h2.5v1.6l-1.25 1.5l-1.25 -1.5Z" fill="#e03a30"/><path d="M49.5 8.9h2.5v1.6l-1.25 1.5l-1.25 -1.5Z" fill="#e03a30"/><path d="M53.2 10.4h2.5v1.6l-1.25 1.5l-1.25 -1.5Z" fill="#e03a30"/><path d="M56.5 11.1h2.5v1.6l-1.25 1.5l-1.25 -1.5Z" fill="#e03a30"/><path d="M69.7 11.1h2.5v1.6l-1.25 1.5l-1.25 -1.5Z" fill="#e03a30"/><path d="M71.9 12.6h2.5v1.6l-1.25 1.5l-1.25 -1.5Z" fill="#e03a30"/><path d="M93.7 13.5h2.5v1.6l-1.25 1.5l-1.25 -1.5Z" fill="#e03a30"/><path d="M21.9 15.9h2.5v1.6l-1.25 1.5l-1.25 -1.5Z" fill="#e03a30"/><path d="M42.1 15.3h2.5v1.6l-1.25 1.5l-1.25 -1.5Z" fill="#e03a30"/><path d="M59.6 16.3h2.5v1.6l-1.25 1.5l-1.25 -1.5Z" fill="#e03a30"/><path d="M62.4 17.2h2.5v1.6l-1.25 1.5l-1.25 -1.5Z" fill="#e03a30"/><path d="M66.1 15.3h2.5v1.6l-1.25 1.5l-1.25 -1.5Z" fill="#e03a30"/><path d="M51.3 19.0h2.5v1.6l-1.25 1.5l-1.25 -1.5Z" fill="#e03a30"/><path d="M45.8 20.9h2.5v1.6l-1.25 1.5l-1.25 -1.5Z" fill="#e03a30"/><path d="M59.6 19.9h2.5v1.6l-1.25 1.5l-1.25 -1.5Z" fill="#e03a30"/><path d="M63.3 19.0h2.5v1.6l-1.25 1.5l-1.25 -1.5Z" fill="#e03a30"/><path d="M69.7 18.1h2.5v1.6l-1.25 1.5l-1.25 -1.5Z" fill="#e03a30"/><path d="M87.2 19.9h2.5v1.6l-1.25 1.5l-1.25 -1.5Z" fill="#e03a30"/><path d="M83.5 22.2h2.5v1.6l-1.25 1.5l-1.25 -1.5Z" fill="#e03a30"/><path d="M40.3 20.9h2.5v1.6l-1.25 1.5l-1.25 -1.5Z" fill="#e03a30"/><path d="M38.4 24.0h2.5v1.6l-1.25 1.5l-1.25 -1.5Z" fill="#e03a30"/><path d="M43.0 24.6h2.5v1.6l-1.25 1.5l-1.25 -1.5Z" fill="#e03a30"/><path d="M52.3 24.6h2.5v1.6l-1.25 1.5l-1.25 -1.5Z" fill="#e03a30"/><path d="M65.1 23.6h2.5v1.6l-1.25 1.5l-1.25 -1.5Z" fill="#e03a30"/><path d="M70.7 23.6h2.5v1.6l-1.25 1.5l-1.25 -1.5Z" fill="#e03a30"/><path d="M75.3 24.6h2.5v1.6l-1.25 1.5l-1.25 -1.5Z" fill="#e03a30"/><path d="M32.9 28.8h2.5v1.6l-1.25 1.5l-1.25 -1.5Z" fill="#e03a30"/><path d="M38.4 28.8h2.5v1.6l-1.25 1.5l-1.25 -1.5Z" fill="#e03a30"/><path d="M44.9 27.3h2.5v1.6l-1.25 1.5l-1.25 -1.5Z" fill="#e03a30"/><path d="M49.5 29.2h2.5v1.6l-1.25 1.5l-1.25 -1.5Z" fill="#e03a30"/><path d="M53.2 28.2h2.5v1.6l-1.25 1.5l-1.25 -1.5Z" fill="#e03a30"/><path d="M60.5 28.2h2.5v1.6l-1.25 1.5l-1.25 -1.5Z" fill="#e03a30"/><path d="M67.9 28.2h2.5v1.6l-1.25 1.5l-1.25 -1.5Z" fill="#e03a30"/><path d="M72.5 30.1h2.5v1.6l-1.25 1.5l-1.25 -1.5Z" fill="#e03a30"/><path d="M77.1 29.5h2.5v1.6l-1.25 1.5l-1.25 -1.5Z" fill="#e03a30"/><path d="M12.7 31.4h2.5v1.6l-1.25 1.5l-1.25 -1.5Z" fill="#e03a30"/><path d="M16.7 31.9h2.5v1.6l-1.25 1.5l-1.25 -1.5Z" fill="#e03a30"/><path d="M22.2 32.5h2.5v1.6l-1.25 1.5l-1.25 -1.5Z" fill="#e03a30"/><path d="M42.1 31.9h2.5v1.6l-1.25 1.5l-1.25 -1.5Z" fill="#e03a30"/><path d="M49.5 33.2h2.5v1.6l-1.25 1.5l-1.25 -1.5Z" fill="#e03a30"/><path d="M54.1 32.5h2.5v1.6l-1.25 1.5l-1.25 -1.5Z" fill="#e03a30"/><path d="M58.7 33.8h2.5v1.6l-1.25 1.5l-1.25 -1.5Z" fill="#e03a30"/><path d="M64.2 33.2h2.5v1.6l-1.25 1.5l-1.25 -1.5Z" fill="#e03a30"/><path d="M68.8 34.3h2.5v1.6l-1.25 1.5l-1.25 -1.5Z" fill="#e03a30"/><path d="M73.8 31.4h2.5v1.6l-1.25 1.5l-1.25 -1.5Z" fill="#e03a30"/><path d="M20.0 38.0h2.5v1.6l-1.25 1.5l-1.25 -1.5Z" fill="#e03a30"/><path d="M33.8 37.4h2.5v1.6l-1.25 1.5l-1.25 -1.5Z" fill="#e03a30"/><path d="M36.6 38.7h2.5v1.6l-1.25 1.5l-1.25 -1.5Z" fill="#e03a30"/><path d="M42.1 38.7h2.5v1.6l-1.25 1.5l-1.25 -1.5Z" fill="#e03a30"/><path d="M48.6 36.5h2.5v1.6l-1.25 1.5l-1.25 -1.5Z" fill="#e03a30"/><path d="M52.3 37.4h2.5v1.6l-1.25 1.5l-1.25 -1.5Z" fill="#e03a30"/><path d="M56.9 38.0h2.5v1.6l-1.25 1.5l-1.25 -1.5Z" fill="#e03a30"/><path d="M61.5 38.7h2.5v1.6l-1.25 1.5l-1.25 -1.5Z" fill="#e03a30"/><path d="M66.1 38.7h2.5v1.6l-1.25 1.5l-1.25 -1.5Z" fill="#e03a30"/><path d="M69.7 37.4h2.5v1.6l-1.25 1.5l-1.25 -1.5Z" fill="#e03a30"/><path d="M17.3 41.1h2.5v1.6l-1.25 1.5l-1.25 -1.5Z" fill="#e03a30"/><path d="M25.6 41.1h2.5v1.6l-1.25 1.5l-1.25 -1.5Z" fill="#e03a30"/><path d="M47.6 40.6h2.5v1.6l-1.25 1.5l-1.25 -1.5Z" fill="#e03a30"/><path d="M52.3 42.0h2.5v1.6l-1.25 1.5l-1.25 -1.5Z" fill="#e03a30"/><path d="M56.9 42.4h2.5v1.6l-1.25 1.5l-1.25 -1.5Z" fill="#e03a30"/><path d="M61.5 43.0h2.5v1.6l-1.25 1.5l-1.25 -1.5Z" fill="#e03a30"/><path d="M65.1 43.0h2.5v1.6l-1.25 1.5l-1.25 -1.5Z" fill="#e03a30"/><path d="M67.9 41.1h2.5v1.6l-1.25 1.5l-1.25 -1.5Z" fill="#e03a30"/><path d="M1.3 46.1h2.5v1.6l-1.25 1.5l-1.25 -1.5Z" fill="#e03a30"/><path d="M29.6 46.6h2.5v1.6l-1.25 1.5l-1.25 -1.5Z" fill="#e03a30"/><path d="M35.1 43.9h2.5v1.6l-1.25 1.5l-1.25 -1.5Z" fill="#e03a30"/><path d="M42.1 47.6h2.5v1.6l-1.25 1.5l-1.25 -1.5Z" fill="#e03a30"/><path d="M46.7 45.3h2.5v1.6l-1.25 1.5l-1.25 -1.5Z" fill="#e03a30"/><path d="M50.4 44.8h2.5v1.6l-1.25 1.5l-1.25 -1.5Z" fill="#e03a30"/><path d="M54.1 45.7h2.5v1.6l-1.25 1.5l-1.25 -1.5Z" fill="#e03a30"/><path d="M57.8 46.1h2.5v1.6l-1.25 1.5l-1.25 -1.5Z" fill="#e03a30"/><path d="M61.5 45.3h2.5v1.6l-1.25 1.5l-1.25 -1.5Z" fill="#e03a30"/><path d="M64.2 44.2h2.5v1.6l-1.25 1.5l-1.25 -1.5Z" fill="#e03a30"/><path d="M23.7 52.2h2.5v1.6l-1.25 1.5l-1.25 -1.5Z" fill="#e03a30"/><path d="M31.1 49.0h2.5v1.6l-1.25 1.5l-1.25 -1.5Z" fill="#e03a30"/><path d="M37.0 50.3h2.5v1.6l-1.25 1.5l-1.25 -1.5Z" fill="#e03a30"/><path d="M39.4 51.6h2.5v1.6l-1.25 1.5l-1.25 -1.5Z" fill="#e03a30"/><path d="M43.0 49.8h2.5v1.6l-1.25 1.5l-1.25 -1.5Z" fill="#e03a30"/><path d="M52.3 47.9h2.5v1.6l-1.25 1.5l-1.25 -1.5Z" fill="#e03a30"/><path d="M55.9 47.9h2.5v1.6l-1.25 1.5l-1.25 -1.5Z" fill="#e03a30"/><path d="M58.7 47.2h2.5v1.6l-1.25 1.5l-1.25 -1.5Z" fill="#e03a30"/><path d="M16.4 54.6h2.5v1.6l-1.25 1.5l-1.25 -1.5Z" fill="#e03a30"/><path d="M28.3 55.3h2.5v1.6l-1.25 1.5l-1.25 -1.5Z" fill="#e03a30"/><path d="M32.9 54.0h2.5v1.6l-1.25 1.5l-1.25 -1.5Z" fill="#e03a30"/><path d="M34.8 53.1h2.5v1.6l-1.25 1.5l-1.25 -1.5Z" fill="#e03a30"/><path d="M21.0 56.4h2.5v1.6l-1.25 1.5l-1.25 -1.5Z" fill="#e03a30"/><path d="M26.5 58.6h2.5v1.6l-1.25 1.5l-1.25 -1.5Z" fill="#e03a30"/><path d="M31.5 57.1h2.5v1.6l-1.25 1.5l-1.25 -1.5Z" fill="#e03a30"/><path d="M21.0 60.8h2.5v1.6l-1.25 1.5l-1.25 -1.5Z" fill="#e03a30"/><path d="M33.8 60.8h2.5v1.6l-1.25 1.5l-1.25 -1.5Z" fill="#e03a30"/><path d="M0.7 63.8h2.5v1.6l-1.25 1.5l-1.25 -1.5Z" fill="#e03a30"/><path d="M7.2 66.0h2.5v1.6l-1.25 1.5l-1.25 -1.5Z" fill="#e03a30"/><path d="M25.0 64.5h2.5v1.6l-1.25 1.5l-1.25 -1.5Z" fill="#e03a30"/><path d="M25.6 75.2h2.5v1.6l-1.25 1.5l-1.25 -1.5Z" fill="#e03a30"/><path d="M55.0 43.9h2.5v1.6l-1.25 1.5l-1.25 -1.5Z" fill="#e03a30"/><path d="M59.6 44.2h2.5v1.6l-1.25 1.5l-1.25 -1.5Z" fill="#e03a30"/><path d="M53.2 40.2h2.5v1.6l-1.25 1.5l-1.25 -1.5Z" fill="#e03a30"/><path d="M57.2 45.0h2.5v1.6l-1.25 1.5l-1.25 -1.5Z" fill="#e03a30"/><path d="M60.5 43.9h2.5v1.6l-1.25 1.5l-1.25 -1.5Z" fill="#e03a30"/><path d="M62.7 43.1h2.5v1.6l-1.25 1.5l-1.25 -1.5Z" fill="#e03a30"/><path d="M58.3 43.5h2.5v1.6l-1.25 1.5l-1.25 -1.5Z" fill="#e03a30"/><path d="M56.1 45.3h2.5v1.6l-1.25 1.5l-1.25 -1.5Z" fill="#e03a30"/><path d="M53.9 44.2h2.5v1.6l-1.25 1.5l-1.25 -1.5Z" fill="#e03a30"/><path d="M63.8 42.0h2.5v1.6l-1.25 1.5l-1.25 -1.5Z" fill="#e03a30"/><path d="M65.7 40.6h2.5v1.6l-1.25 1.5l-1.25 -1.5Z" fill="#e03a30"/><path d="M59.4 41.3h2.5v1.6l-1.25 1.5l-1.25 -1.5Z" fill="#e03a30"/><path d="M61.6 40.2h2.5v1.6l-1.25 1.5l-1.25 -1.5Z" fill="#e03a30"/><path d="M55.4 40.6h2.5v1.6l-1.25 1.5l-1.25 -1.5Z" fill="#e03a30"/><path d="M51.0 43.1h2.5v1.6l-1.25 1.5l-1.25 -1.5Z" fill="#e03a30"/><path d="M52.3 45.7h2.5v1.6l-1.25 1.5l-1.25 -1.5Z" fill="#e03a30"/><path d="M67.5 38.7h2.5v1.6l-1.25 1.5l-1.25 -1.5Z" fill="#e03a30"/><path d="M69.0 36.1h2.5v1.6l-1.25 1.5l-1.25 -1.5Z" fill="#e03a30"/><path d="M71.2 33.2h2.5v1.6l-1.25 1.5l-1.25 -1.5Z" fill="#e03a30"/><path d="M62.4 34.7h2.5v1.6l-1.25 1.5l-1.25 -1.5Z" fill="#e03a30"/><path d="M60.2 36.5h2.5v1.6l-1.25 1.5l-1.25 -1.5Z" fill="#e03a30"/><path d="M64.6 35.8h2.5v1.6l-1.25 1.5l-1.25 -1.5Z" fill="#e03a30"/><path d="M57.2 39.8h2.5v1.6l-1.25 1.5l-1.25 -1.5Z" fill="#e03a30"/><path d="M62.4 41.1h2.5v1.6l-1.25 1.5l-1.25 -1.5Z" fill="#e03a30"/><path d="M55.9 35.6h2.5v1.6l-1.25 1.5l-1.25 -1.5Z" fill="#e03a30"/><path d="M51.3 34.7h2.5v1.6l-1.25 1.5l-1.25 -1.5Z" fill="#e03a30"/><path d="M44.0 35.6h2.5v1.6l-1.25 1.5l-1.25 -1.5Z" fill="#e03a30"/><path d="M63.3 36.5h2.5v1.6l-1.25 1.5l-1.25 -1.5Z" fill="#e03a30"/><path d="M67.0 36.5h2.5v1.6l-1.25 1.5l-1.25 -1.5Z" fill="#e03a30"/><path d="M57.8 31.0h2.5v1.6l-1.25 1.5l-1.25 -1.5Z" fill="#e03a30"/><path d="M54.1 25.5h2.5v1.6l-1.25 1.5l-1.25 -1.5Z" fill="#e03a30"/><path d="M49.5 26.4h2.5v1.6l-1.25 1.5l-1.25 -1.5Z" fill="#e03a30"/><path d="M61.5 31.9h2.5v1.6l-1.25 1.5l-1.25 -1.5Z" fill="#e03a30"/><path d="M66.1 30.1h2.5v1.6l-1.25 1.5l-1.25 -1.5Z" fill="#e03a30"/><rect width="100" height="0.5" fill="#aaa"/></g></svg>
</div>
<div id="c2" class="abs card" style="left:59px;top:356px;width:370px;height:180px">
  <svg class="pin" width="8.2" height="10.2" viewBox="0 0 8.2 10.2"><path d="M4.1 0.5C6.1 0.5 7.7 2 7.7 4C7.7 6.4 4.1 9.8 4.1 9.8C4.1 9.8 0.5 6.4 0.5 4C0.5 2 2.1 0.5 4.1 0.5Z" fill="none" stroke="#8d99a5" stroke-width="0.8"/><circle cx="4.1" cy="3.9" r="1.7" fill="none" stroke="#8d99a5" stroke-width="0.8"/></svg><div class="cap">Details</div>
  <div class="hr"></div>
  <div class="abs" style="left:13px;top:65px;width:343px;height:97px;border:1px solid #999;text-align:center;line-height:96.5px;font-size:10.5px;color:#333">Drop logo here or click to upload.</div>
</div>
<div id="c3" class="abs card" style="left:449px;top:356px;width:370px;height:180px">
  <svg class="pin" width="8.2" height="10.2" viewBox="0 0 8.2 10.2"><path d="M4.1 0.5C6.1 0.5 7.7 2 7.7 4C7.7 6.4 4.1 9.8 4.1 9.8C4.1 9.8 0.5 6.4 0.5 4C0.5 2 2.1 0.5 4.1 0.5Z" fill="none" stroke="#8d99a5" stroke-width="0.8"/><circle cx="4.1" cy="3.9" r="1.7" fill="none" stroke="#8d99a5" stroke-width="0.8"/></svg><div class="cap">Center Map</div>
  <div class="hr"></div>
  <div class="abs" style="left:23px;top:54px;font-size:9.7px;color:#333">Location</div>
  <div class="abs" style="left:80px;top:52px;width:266px;height:23px;border:1px solid #dcdee1;border-radius:2.5px;line-height:22.5px;padding-left:8px;font-size:9.45px;color:#333;white-space:nowrap">650 1/2 Queen St W, Toronto, ON M6J 1E4, Kanada</div>
  <svg class="abs" style="left:13px;top:82px" width="343" height="90" viewBox="0 0 343 90"><defs><pattern id="g1" width="12.4" height="10.6" patternUnits="userSpaceOnUse" patternTransform="rotate(-16.5)"><path d="M0 0.6H12.4M0.6 0V10.6" stroke="#fff" stroke-width="1.1"/></pattern><pattern id="g2" width="7.4" height="6.4" patternUnits="userSpaceOnUse" patternTransform="rotate(-16.5)"><path d="M0 0.5H7.4M0.5 0V6.4" stroke="#fff" stroke-width="1.05"/></pattern><pattern id="g3" width="4.6" height="4.0" patternUnits="userSpaceOnUse" patternTransform="rotate(-16.5)"><path d="M0 0.5H4.6M0.5 0V4" stroke="#fff" stroke-width="0.9"/></pattern><filter id="bm"><feGaussianBlur stdDeviation="0.35"/></filter><linearGradient id="fade" x1="0" x2="1"><stop offset="0" stop-color="#fff" stop-opacity="0"/><stop offset="0.25" stop-color="#fff"/><stop offset="1" stop-color="#fff"/></linearGradient><mask id="mk"><rect x="70" width="273" height="90" fill="url(#fade)"/></mask></defs><g filter="url(#bm)"><rect width="343" height="90" fill="#e8eaed"/><rect width="343" height="90" fill="url(#g1)"/><path d="M96.0 -2.0 L122.0 92.0 L345.0 92.0 L345.0 -2.0Z" fill="#e8eaed"/><path d="M96.0 -2.0 L122.0 92.0 L345.0 92.0 L345.0 -2.0Z" fill="url(#g2)"/><path d="M128.0 92.0 L139.0 52.0 L176.0 41.0 L213.0 52.0 L205.0 92.0Z" fill="#e8eaed"/><path d="M128.0 92.0 L139.0 52.0 L176.0 41.0 L213.0 52.0 L205.0 92.0Z" fill="url(#g3)"/><ellipse cx="36.2" cy="6.1" rx="2" ry="6" fill="#d3ebcd" transform="rotate(14 36.2 6.1)"/><ellipse cx="64.4" cy="16.1" rx="3" ry="6" fill="#d3ebcd" transform="rotate(14 64.4 16.1)"/><ellipse cx="80.5" cy="28.2" rx="8" ry="2.5" fill="#d3ebcd" transform="rotate(14 80.5 28.2)"/><ellipse cx="62.4" cy="60.4" rx="3" ry="6" fill="#d3ebcd" transform="rotate(14 62.4 60.4)"/><ellipse cx="39.3" cy="41.3" rx="2" ry="5" fill="#d3ebcd" transform="rotate(14 39.3 41.3)"/><ellipse cx="52.3" cy="54.4" rx="3" ry="4" fill="#d3ebcd" transform="rotate(14 52.3 54.4)"/><ellipse cx="84.5" cy="67.4" rx="4" ry="6" fill="#d3ebcd" transform="rotate(14 84.5 67.4)"/><ellipse cx="92.6" cy="16.1" rx="1.6" ry="8" fill="#d3ebcd" transform="rotate(14 92.6 16.1)"/><ellipse cx="114.7" cy="13.1" rx="3" ry="3" fill="#d3ebcd" transform="rotate(14 114.7 13.1)"/><ellipse cx="4.0" cy="52.3" rx="3" ry="2" fill="#d3ebcd" transform="rotate(14 4.0 52.3)"/><ellipse cx="16.1" cy="6.1" rx="5" ry="1.5" fill="#d3ebcd" transform="rotate(14 16.1 6.1)"/><ellipse cx="127.8" cy="48.3" rx="1.6" ry="2.2" fill="#d3ebcd" transform="rotate(14 127.8 48.3)"/><ellipse cx="156.9" cy="8.1" rx="6" ry="3" fill="#d3ebcd" transform="rotate(14 156.9 8.1)"/><ellipse cx="168.0" cy="18.1" rx="3" ry="4" fill="#d3ebcd" transform="rotate(14 168.0 18.1)"/><ellipse cx="2.0" cy="74.5" rx="3" ry="4" fill="#d3ebcd" transform="rotate(14 2.0 74.5)"/><ellipse cx="22.2" cy="80.5" rx="4" ry="2" fill="#d3ebcd" transform="rotate(14 22.2 80.5)"/><ellipse cx="141.8" cy="14.1" rx="4" ry="3.5" fill="#d3ebcd" transform="rotate(14 141.8 14.1)"/><ellipse cx="150.9" cy="29.2" rx="3" ry="5" fill="#d3ebcd" transform="rotate(14 150.9 29.2)"/><ellipse cx="175.0" cy="13.1" rx="4" ry="4" fill="#d3ebcd" transform="rotate(14 175.0 13.1)"/><ellipse cx="179.0" cy="26.2" rx="2.5" ry="5" fill="#d3ebcd" transform="rotate(14 179.0 26.2)"/><ellipse cx="198.2" cy="34.2" rx="2" ry="3" fill="#d3ebcd" transform="rotate(14 198.2 34.2)"/><ellipse cx="231.4" cy="12.1" rx="4" ry="2" fill="#d3ebcd" transform="rotate(14 231.4 12.1)"/><ellipse cx="252.5" cy="31.2" rx="5" ry="3" fill="#d3ebcd" transform="rotate(14 252.5 31.2)"/><ellipse cx="275.6" cy="24.2" rx="4" ry="4" fill="#d3ebcd" transform="rotate(14 275.6 24.2)"/><ellipse cx="247.4" cy="43.3" rx="2" ry="3" fill="#d3ebcd" transform="rotate(14 247.4 43.3)"/><ellipse cx="233.4" cy="37.3" rx="3" ry="3" fill="#d3ebcd" transform="rotate(14 233.4 37.3)"/><ellipse cx="262.5" cy="5.1" rx="4" ry="2.5" fill="#d3ebcd" transform="rotate(14 262.5 5.1)"/><ellipse cx="293.7" cy="2.0" rx="4" ry="3" fill="#d3ebcd" transform="rotate(14 293.7 2.0)"/><ellipse cx="222.1" cy="68.9" rx="2.2" ry="6" fill="#d3ebcd" transform="rotate(14 222.1 68.9)"/><ellipse cx="133.1" cy="69.9" rx="1.8" ry="2.2" fill="#d3ebcd" transform="rotate(14 133.1 69.9)"/><path d="M77.5 83.5 C84.5 88.5 86.5 94.6 82.5 99.0" stroke="#aadaff" stroke-width="1" fill="none"/><path d="M298.1 -1.0 L291.7 6.5 L283.7 16.1 L275.6 27.2 L269.6 34.2 L264.5 39.9 L257.5 42.3 L249.5 44.3 L242.4 49.3 L239.4 52.7 L242.8 51.3 L234.5 57.5 L229.3 66.8 L226.2 75.1 L224.1 85.5 L343.0 95.0 L343.0 -2.0Z" fill="#aadaff"/><path d="M162.1 86.5 L174.5 79.2 L186.9 75.1 L194.1 71.0 L199.3 73.0 L191.0 80.3 L192.1 86.5Z" fill="#aadaff"/><path d="M197.2 67.9 L215.9 61.7 L232.4 54.4 L229.3 66.8 L224.1 86.5 L193.1 86.5 L191.0 80.3 L199.3 73.0Z" fill="#f1f1f1"/><path d="M212.8 86.5 L219.0 73.0 L221.0 74.1 L216.9 86.5Z" fill="#aadaff"/><path d="M227.3 62.7 L234.5 56.9 L235.5 58.6 L228.7 64.8Z" fill="#aadaff"/><path d="M199.3 78.2 L224.1 63.7" stroke="#e0e0e0" stroke-width="1.2" fill="none"/><path d="M267.6 37.3V90" stroke="#bfe3ff" stroke-width="0.6"/><path d="M209.2 -1.6 L203.2 2.4 L195.1 4.1 L189.1 9.1 L185.5 16.1 L184.7 26.2 L186.7 36.2 L190.1 46.3 L192.1 50.3 L193.1 57.5 L196.8 64.3" fill="none" stroke="#f0cd72" stroke-width="2.7" stroke-linejoin="round" stroke-linecap="round" opacity=".55"/><path d="M209.2 -1.6 L203.2 2.4 L195.1 4.1 L189.1 9.1 L185.5 16.1 L184.7 26.2 L186.7 36.2 L190.1 46.3 L192.1 50.3 L193.1 57.5 L196.8 64.3" fill="none" stroke="#fadb82" stroke-width="1.9" stroke-linejoin="round" stroke-linecap="round"/><path d="M291.1 -1.6 L284.7 7.1 L279.6 12.1 L271.6 19.1 L265.5 23.8 L257.5 26.2 L247.4 29.2 L241.0 31.8 L238.2 36.6 L239.4 42.3 L240.6 47.3 L236.6 50.3 L224.1 54.4 L207.6 61.0" fill="none" stroke="#f0cd72" stroke-width="2.7" stroke-linejoin="round" stroke-linecap="round" opacity=".55"/><path d="M291.1 -1.6 L284.7 7.1 L279.6 12.1 L271.6 19.1 L265.5 23.8 L257.5 26.2 L247.4 29.2 L241.0 31.8 L238.2 36.6 L239.4 42.3 L240.6 47.3 L236.6 50.3 L224.1 54.4 L207.6 61.0" fill="none" stroke="#fadb82" stroke-width="1.9" stroke-linejoin="round" stroke-linecap="round"/><path d="M207.6 61.0 L197.2 68.1 L182.8 71.0 L168.3 77.2 L151.7 82.3 L137.2 86.5" fill="none" stroke="#f0cd72" stroke-width="3.0999999999999996" stroke-linejoin="round" stroke-linecap="round" opacity=".55"/><path d="M207.6 61.0 L197.2 68.1 L182.8 71.0 L168.3 77.2 L151.7 82.3 L137.2 86.5" fill="none" stroke="#fadb82" stroke-width="2.3" stroke-linejoin="round" stroke-linecap="round"/><circle cx="113.7" cy="1.0" r="1.6" fill="#f7c64a"/></g><text x="91.0" y="8.5" font-family="Liberation Sans,sans-serif" font-size="6.2" fill="#6f7d90" letter-spacing="0.07" font-weight="bold">YORK</text><text x="0.4" y="17.7" font-family="Liberation Sans,sans-serif" font-size="6" fill="#8794b0" letter-spacing="0.56" font-weight="normal">CHVIEW</text><text x="53.9" y="48.9" font-family="Liberation Sans,sans-serif" font-size="6" fill="#8794b0" letter-spacing="0.61" font-weight="normal">THE JUNCTION</text><text x="186.1" y="14.5" font-family="Liberation Sans,sans-serif" font-size="6.2" fill="#6f7d90" letter-spacing="0.2" font-weight="bold">EAST YORK</text><text x="191.1" y="48.7" font-family="Liberation Sans,sans-serif" font-size="6" fill="#8794b0" letter-spacing="0.51" font-weight="normal">LESLIEVILLE</text><text x="87.5" y="85.1" font-family="Liberation Sans,sans-serif" font-size="4.6" fill="#a8742c" letter-spacing="0.3" font-weight="bold">PARK</text><circle cx="142.5" cy="72.3" r="4" fill="#8284fa"/><circle cx="142.5" cy="72.3" r="2.4" fill="#bdbeff"/><text x="144.9" y="67.9" font-family="Liberation Sans,sans-serif" font-size="11.8" letter-spacing="0.3" fill="#fff" stroke="#fff" stroke-width="2" stroke-linejoin="round" opacity=".9">Toronto</text><text x="144.9" y="67.9" font-family="Liberation Sans,sans-serif" font-size="11.8" letter-spacing="0.3" fill="#2b2b2b" stroke="#2b2b2b" stroke-width="0.2">Toronto</text><g transform="translate(142.1 71.8)"><path d="M0 0C-0.9 -8 -8.8 -11.5 -8.8 -19.8A8.8 8.8 0 0 1 8.8 -19.8C8.8 -11.5 0.9 -8 0 0Z" fill="#ea4335"/><circle cx="0" cy="-19.8" r="3.1" fill="#8e1b14"/></g><g><rect x="310" y="6.9" width="26.7" height="26.2" rx="1.8" fill="#fff" style="filter:drop-shadow(0 0.6px 1.2px rgba(0,0,0,.3))"/><path d="M317.7 18.2V14.8H321.1M325.1 14.8H328.5V18.2M328.5 21.8V25.2H325.1M321.1 25.2H317.7V21.8" fill="none" stroke="#666" stroke-width="1.35"/></g><rect x="310" y="80" width="26.7" height="27" rx="1.3" fill="#fff" style="filter:drop-shadow(0 0.6px 1.2px rgba(0,0,0,.3))"/></svg>
</div>
</body>
</html>
